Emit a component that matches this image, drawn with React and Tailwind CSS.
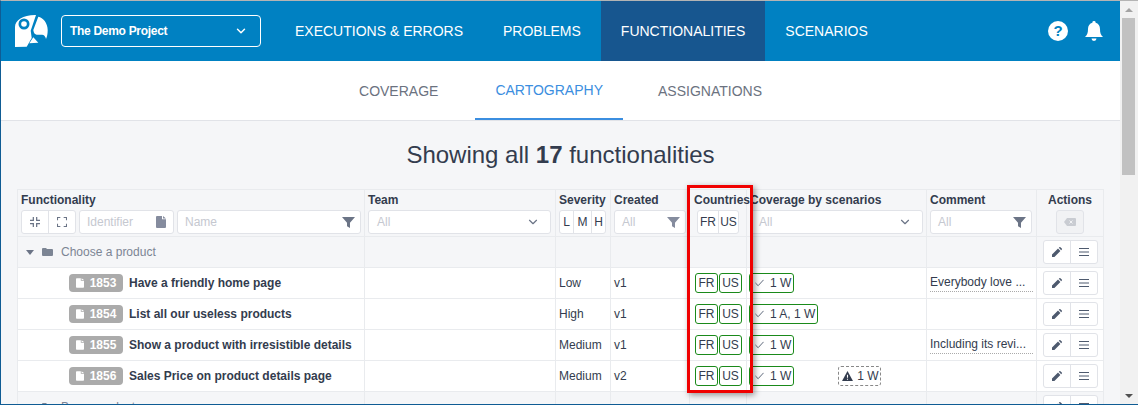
import React from 'react';
import { ChevronDown } from 'lucide-react';

const FilterIcon = ({ className }) => (
  <svg viewBox="0 0 14 14" className={className} fill="currentColor">
    <path d="M0 1h14L8.6 7.4V13L5.4 11V7.4z" />
  </svg>
);

const FileIcon = ({ className }) => (
  <svg viewBox="0 0 10 12" className={className} fill="currentColor">
    <path d="M0 1a1 1 0 0 1 1-1h5v3.2h4V11a1 1 0 0 1-1 1H1a1 1 0 0 1-1-1zM7 0l3 2.4H7z" />
  </svg>
);

const rows = [
  { id: 1853, name: 'Have a friendly home page', severity: 'Low', created: 'v1', coverage: '1 W', comment: 'Everybody love ...' },
  { id: 1854, name: 'List all our useless products', severity: 'High', created: 'v1', coverage: '1 A, 1 W' },
  { id: 1855, name: 'Show a product with irresistible details', severity: 'Medium', created: 'v1', coverage: '1 W', comment: 'Including its revi...' },
  { id: 1856, name: 'Sales Price on product details page', severity: 'Medium', created: 'v2', coverage: '1 W', warning: '1 W' },
];

const cell = 'border border-[#e9ebee] align-middle p-0';
const headCell = 'border border-[#e9ebee] p-0 pl-[3px] align-top';

const Actions = () => (
  <div className="mx-auto flex h-[24px] w-[55px] rounded-[3px] border border-[#e1e3e8] bg-white text-[#4e5a6e]">
    <span className="flex w-[27px] items-center justify-center border-r border-[#e1e3e8]">
      <svg viewBox="0 0 10 10" className="h-[10px] w-[10px]" fill="currentColor">
        <path d="M0 10V7.600L6 1.600 8.400 4 2.400 10zM6.800.800 7.400.200a.7.7 0 0 1 1 0l1.400 1.400a.7.7 0 0 1 0 1L9.200 3.200z" />
      </svg>
    </span>
    <span className="flex flex-1 items-center justify-center">
      <svg viewBox="0 0 10 8" className="h-[8px] w-[10px]" stroke="currentColor" strokeWidth="1">
        <path d="M0 .5h10M0 4h10M0 7.500h10" />
      </svg>
    </span>
  </div>
);

const Select = ({ width }) => (
  <div className={`flex h-[24px] items-center justify-between rounded-[3px] border border-[#e1e3e8] bg-white pl-[8px] pr-[10px] font-normal text-[#c5c8d0] ${width}`}>
    <span>All</span>
    <ChevronDown size={14} className="text-[#6b7486]" />
  </div>
);

const Group = ({ label }) => (
  <tr className="h-[31px]">
    <td className={cell}>
      <div className="flex items-center pl-[8px] text-[#7c8594]">
        <span className="h-0 w-0 border-x-[4px] border-t-[5px] border-x-transparent border-t-[#6b7486]" />
        <svg viewBox="0 0 11 8" className="ml-[8px] h-[8px] w-[11px]" fill="#7c8594">
          <path d="M0 1a1 1 0 0 1 1-1h3l1 1h5a1 1 0 0 1 1 1v5a1 1 0 0 1-1 1H1a1 1 0 0 1-1-1z" />
        </svg>
        <span className="ml-[8px]">{label}</span>
      </div>
    </td>
    <td className={cell} />
    <td className={cell} />
    <td className={cell} />
    <td className={cell} />
    <td className={cell} />
    <td className={cell} />
    <td className={cell}><Actions /></td>
  </tr>
);

const Row = ({ r }) => (
  <tr className="h-[31px] bg-white">
    <td className={cell}>
      <div className="flex items-center whitespace-nowrap pl-[51px]">
        <span className="flex h-[18px] w-[54px] items-center justify-center gap-[6px] rounded-[4px] bg-[#ababab] font-bold text-white">
          <FileIcon className="h-[10px] w-[8px]" />
          {r.id}
        </span>
        <span className="ml-[6px] font-bold text-[#333c4e]">{r.name}</span>
      </div>
    </td>
    <td className={cell} />
    <td className={`${cell} pl-[3px]`}>{r.severity}</td>
    <td className={`${cell} pl-[3px]`}>{r.created}</td>
    <td className={cell}>
      <div className="flex gap-[1px] pl-[5px]">
        <span className="flex h-[20px] w-[23px] items-center justify-center rounded-[3px] border border-[#1a8a1a]">FR</span>
        <span className="flex h-[20px] w-[23px] items-center justify-center rounded-[3px] border border-[#1a8a1a]">US</span>
      </div>
    </td>
    <td className={cell}>
      <div className="flex items-center pl-[2px]">
        <span className="flex h-[20px] items-center gap-[6px] rounded-[3px] border border-[#1a8a1a] pl-[5px] pr-[2px]">
          <svg viewBox="0 0 10 8" className="h-[8px] w-[9px]" fill="none" stroke="#4e5a6e" strokeWidth="1">
            <path d="M.5 4l3 3L9.500.5" />
          </svg>
          {r.coverage}
        </span>
        {r.warning && (
          <span className="ml-[44px] flex h-[20px] items-center gap-[4px] rounded-[3px] border border-dashed border-[#888] pl-[3px] pr-[1px]">
            <svg viewBox="0 0 12 11" className="h-[10px] w-[11px]">
              <path fill="#333c4e" d="M6 0l6 11H0z" />
              <path stroke="#fff" strokeWidth="1.200" d="M6 4v3.500M6 8.500v1.200" />
            </svg>
            {r.warning}
          </span>
        )}
      </div>
    </td>
    <td className={`${cell} px-[3px]`}>
      {r.comment && (
        <span className="block border-b border-dotted border-[#aaa] leading-[17px]">{r.comment}</span>
      )}
    </td>
    <td className={cell}><Actions /></td>
  </tr>
);

const App = () => {
  return (
    <div className="relative flex h-[405px] w-[1138px] overflow-hidden border-t border-b border-l border-t-[#b4b4b4] border-b-[#0f5c94] border-l-[#0f5c94] bg-[#f5f6f8] font-['Liberation_Sans',Arial,sans-serif] text-[12px] text-[#333c4e]">
      <div className="flex min-w-0 flex-1 flex-col">
        {/* Header */}
        <header className="flex h-[60px] shrink-0 items-center bg-[#0081c2] text-white">
          <svg viewBox="0 0 33 32" className="ml-[14px] h-[32px] w-[33px]">
            <path fill="#fff" d="M0 32V12C0 5 8 0 20 0h1L15.700 15.700 16.700 23 11.700 31.700z" />
            <path fill="#fff" d="M23.300 1.700C28 2.500 32.700 8 32.700 15c0 4-.7 7-1.700 9-.5-2-1.500-3.500-2.700-4-2.800-.8-5.800.5-8.300-1-1-1-1.500-2.500-1.700-4z" />
            <path fill="#fff" d="M18.300 22.300 23.300 27.700 14.300 28.300z" />
            <circle cx="9" cy="9" r="5.500" fill="#0081c2" />
            <circle cx="9" cy="9" r="2.800" fill="#fff" />
          </svg>
          <div className="ml-[13px] flex h-[32px] w-[200px] items-center justify-between rounded-[4px] border border-white pl-[8px] pr-[12px] font-bold tracking-[-0.3px]">
            <span>The Demo Project</span>
            <ChevronDown size={14} strokeWidth={2.5} />
          </div>
          <nav className="ml-[14px] flex h-full text-[14px]">
            <span className="flex items-center px-[20px]">EXECUTIONS &amp; ERRORS</span>
            <span className="flex items-center px-[20px]">PROBLEMS</span>
            <span className="flex items-center bg-[#17568f] px-[20px]">FUNCTIONALITIES</span>
            <span className="flex items-center px-[20px]">SCENARIOS</span>
          </nav>
          <div className="ml-auto flex items-center gap-[17px] pr-[17px]">
            <span className="flex h-[20px] w-[20px] items-center justify-center rounded-full bg-white text-[15px] font-bold text-[#0081c2]">?</span>
            <svg viewBox="0 0 18 20" className="h-[20px] w-[18px]" fill="#fff">
              <path d="M9 0a1.600 1.600 0 0 1 1.600 1.800C13.400 2.500 15 5 15 8c0 4 .8 5.800 3 8H0c2.200-2.200 3-4 3-8 0-3 1.600-5.500 4.400-6.200A1.600 1.600 0 0 1 9 0zM6.500 17.500h5a2.500 2.500 0 0 1-5 0z" />
            </svg>
          </div>
        </header>

        {/* Tabs */}
        <div className="flex h-[60px] shrink-0 justify-center border-b border-[#e1e3e8] bg-white text-[14px] text-[#6b7280]">
          <span className="flex items-center px-[20px] pt-[2px]">COVERAGE</span>
          <span className="ml-[17px] flex items-center border-b-2 border-[#3b8ee0] px-[20px] pt-[2px] text-[#3b8ee0]">CARTOGRAPHY</span>
          <span className="ml-[15px] flex items-center px-[20px] pt-[2px]">ASSIGNATIONS</span>
        </div>

        {/* Title */}
        <h1 className="mt-[20px] h-[48px] shrink-0 text-center text-[24px] leading-[28px] text-[#333c4e]">
          Showing all <b>17</b> functionalities
        </h1>

        {/* Table */}
        <div className="pl-[16px]">
          <table className="w-[1086px] table-fixed border-collapse">
            <colgroup>
              <col className="w-[347px]" />
              <col className="w-[191px]" />
              <col className="w-[55px]" />
              <col className="w-[79px]" />
              <col className="w-[57px]" />
              <col className="w-[180px]" />
              <col className="w-[110px]" />
              <col className="w-[67px]" />
            </colgroup>
            <thead>
              <tr className="h-[47px] text-left">
                <th className={headCell}>
                  <div className="pt-[3px] leading-[14px]">Functionality</div>
                  <div className="mt-[3px] flex gap-[3px] font-normal">
                    <div className="flex h-[24px] w-[55px] rounded-[3px] border border-[#e1e3e8] bg-white text-[#6b7486]">
                      <span className="flex w-[27px] items-center justify-center border-r border-[#e1e3e8]">
                        <svg viewBox="0 0 12 12" className="h-[10px] w-[10px]" fill="none" stroke="currentColor" strokeWidth="1.500">
                          <path d="M4 0v4H0M8 0v4h4M4 12V8H0M8 12V8h4" />
                        </svg>
                      </span>
                      <span className="flex flex-1 items-center justify-center">
                        <svg viewBox="0 0 12 12" className="h-[10px] w-[10px]" fill="none" stroke="currentColor" strokeWidth="1.500">
                          <path d="M.5 4V.5H4M8 .5h3.500V4M.5 8v3.500H4M8 11.500h3.500V8" />
                        </svg>
                      </span>
                    </div>
                    <div className="flex h-[24px] w-[95px] items-center justify-between rounded-[3px] border border-[#e1e3e8] bg-white px-[7px] text-[#c5c8d0]">
                      <span>Identifier</span>
                      <FileIcon className="h-[12px] w-[10px] text-[#858c9e]" />
                    </div>
                    <div className="flex h-[24px] w-[184px] items-center justify-between rounded-[3px] border border-[#e1e3e8] bg-white pl-[7px] pr-[5px] text-[#c5c8d0]">
                      <span>Name</span>
                      <FilterIcon className="h-[13px] w-[13px] text-[#6b7486]" />
                    </div>
                  </div>
                </th>
                <th className={headCell}>
                  <div className="pt-[3px] leading-[14px]">Team</div>
                  <div className="mt-[3px]"><Select width="w-[183px]" /></div>
                </th>
                <th className={headCell}>
                  <div className="pt-[3px] leading-[14px]">Severity</div>
                  <div className="mt-[3px] flex h-[24px] w-[47px] rounded-[3px] border border-[#e1e3e8] bg-white font-normal">
                    <span className="flex w-[14px] items-center justify-center border-r border-[#e1e3e8]">L</span>
                    <span className="flex w-[18px] items-center justify-center border-r border-[#e1e3e8]">M</span>
                    <span className="flex flex-1 items-center justify-center">H</span>
                  </div>
                </th>
                <th className={headCell}>
                  <div className="pt-[3px] leading-[14px]">Created</div>
                  <div className="mt-[3px] flex h-[24px] w-[72px] items-center justify-between rounded-[3px] border border-[#e1e3e8] bg-white pl-[7px] pr-[5px] font-normal text-[#c5c8d0]">
                    <span>All</span>
                    <FilterIcon className="h-[13px] w-[13px] text-[#858c9e]" />
                  </div>
                </th>
                <th className={headCell}>
                  <div className="whitespace-nowrap pl-[1px] pt-[3px] leading-[14px]">Countries</div>
                  <div className="mt-[3px] ml-[4px] flex h-[24px] w-[42px] rounded-[3px] border border-[#e1e3e8] bg-white font-normal">
                    <span className="flex w-[21px] items-center justify-center border-r border-[#e1e3e8]">FR</span>
                    <span className="flex flex-1 items-center justify-center">US</span>
                  </div>
                </th>
                <th className={headCell}>
                  <div className="pt-[3px] leading-[14px]">Coverage by scenarios</div>
                  <div className="mt-[3px]"><Select width="w-[173px]" /></div>
                </th>
                <th className={headCell}>
                  <div className="pt-[3px] leading-[14px]">Comment</div>
                  <div className="mt-[3px] flex h-[24px] w-[102px] items-center justify-between rounded-[3px] border border-[#e1e3e8] bg-white pl-[7px] pr-[5px] font-normal text-[#c5c8d0]">
                    <span>All</span>
                    <FilterIcon className="h-[13px] w-[13px] text-[#6b7486]" />
                  </div>
                </th>
                <th className="border border-[#e9ebee] p-0 text-center align-top">
                  <div className="pt-[3px] leading-[14px]">Actions</div>
                  <div className="mx-auto mt-[3px] flex h-[24px] w-[28px] items-center justify-center rounded-[3px] border border-[#e1e3e8] bg-[#f1f2f4]">
                    <svg viewBox="0 0 12 8" className="h-[8px] w-[12px]">
                      <path fill="#c9ccd2" d="M3 0h8a1 1 0 0 1 1 1v6a1 1 0 0 1-1 1H3L0 4z" />
                      <path stroke="#f1f2f4" d="M5.500 2.500l3 3M8.500 2.500l-3 3" />
                    </svg>
                  </div>
                </th>
              </tr>
            </thead>
            <tbody>
              <Group label="Choose a product" />
              {rows.map((r) => <Row key={r.id} r={r} />)}
              <Group label="Buy a product" />
            </tbody>
          </table>
        </div>
      </div>

      {/* Scrollbar */}
      <div className="flex w-[18px] shrink-0 flex-col bg-[#f1f1f1]">
        <span className="ml-[5px] mt-[7px] h-0 w-0 border-x-[4px] border-b-[4px] border-x-transparent border-b-[#a3a3a3]" />
        <span className="ml-[2px] mt-[6px] h-[157px] w-[13px] bg-[#c1c1c1]" />
        <span className="ml-[5px] mt-auto mb-[6px] h-0 w-0 border-x-[4px] border-t-[4px] border-x-transparent border-t-[#505050]" />
      </div>

      {/* Red highlight */}
      <div className="absolute left-[686px] top-[184px] h-[208px] w-[66px] border-[3px] border-[#f00000] shadow-[2px_2px_6px_rgba(0,0,0,0.4)]" />
    </div>
  );
};

export default App;
